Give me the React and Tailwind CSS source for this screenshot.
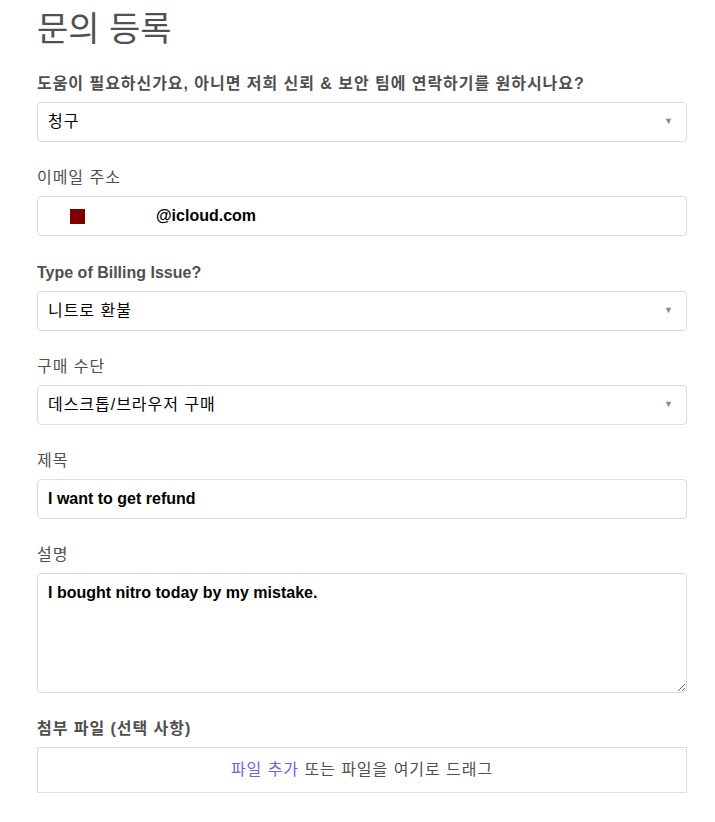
import React from "react";

const font = { fontFamily: '"Liberation Sans", "Noto Sans CJK KR", sans-serif' };

function Label({ children, bold }) {
  return (
    <div
      className={`h-5 mb-2 text-[16px] leading-5 tracking-[0.06em] text-[#4f4f4f] ${bold ? "font-bold" : "font-normal"}`}
    >
      {children}
    </div>
  );
}

function Select({ value }) {
  return (
    <div className="h-10 flex items-center justify-between border border-[#dcdcdc] rounded px-[10px] bg-white">
      <span className="text-[16px] tracking-[0.06em] font-normal text-black">{value}</span>
      <span className="text-[9px] text-[#888] mr-[3px]">▼</span>
    </div>
  );
}

function Input({ children }) {
  return (
    <div className="h-10 flex items-center border border-[#dcdcdc] rounded px-[10px] bg-white text-[16px] font-bold text-black">
      {children}
    </div>
  );
}

export default function App() {
  return (
    <div className="bg-white min-h-[822px] w-[715px] text-black" style={font}>
      <div className="w-[650px] ml-[37px] pt-[7px]">
        <h1 className="text-[34px] leading-[44px] font-normal text-[#505050] mb-[23px]">문의 등록</h1>

        <div className="mb-[26px]">
          <Label bold>
            도움이 필요하신가요, 아니면 저희 신뢰 &amp; 보안 팀에 연락하기를 원하시나요?
          </Label>
          <Select value="청구" />
        </div>

        <div className="mb-[27px]">
          <Label>이메일 주소</Label>
          <Input>
            <span className="w-[15px] h-[15px] bg-[#800000] ml-[22px]" />
            <span className="ml-[71px]">@icloud.com</span>
          </Input>
        </div>

        <div className="mb-[26px]">
          <Label bold>
            <span className="tracking-normal">Type of Billing Issue?</span>
          </Label>
          <Select value="니트로 환불" />
        </div>

        <div className="mb-[26px]">
          <Label>구매 수단</Label>
          <Select value="데스크톱/브라우저 구매" />
        </div>

        <div className="mb-[26px]">
          <Label>제목</Label>
          <Input>I want to get refund</Input>
        </div>

        <div className="mb-[26px]">
          <Label>설명</Label>
          <textarea
            readOnly
            className="block w-full h-[120px] border border-[#dcdcdc] rounded px-[10px] py-[9px] text-[16px] leading-5 font-bold text-black resize-y outline-none"
            style={font}
            defaultValue="I bought nitro today by my mistake."
          />
        </div>

        <div>
          <Label bold>첨부 파일 (선택 사항)</Label>
          <div className="h-[46px] flex items-center justify-center border border-[#dcdcdc] text-[16px] tracking-[0.06em] text-[#4f4f4f]">
            <span className="text-[#6c63e6]">파일 추가</span>
            <span>&nbsp;또는 파일을 여기로 드래그</span>
          </div>
        </div>
      </div>
    </div>
  );
}
